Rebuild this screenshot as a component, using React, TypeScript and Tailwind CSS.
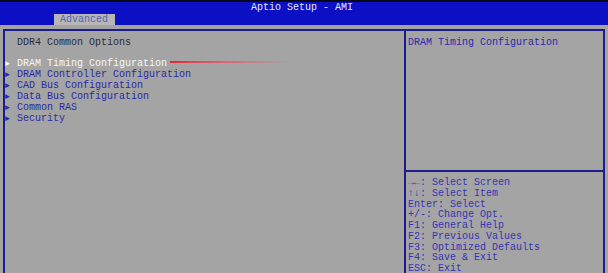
const menuItems = [
  'DRAM Timing Configuration',
  'DRAM Controller Configuration',
  'CAD Bus Configuration',
  'Data Bus Configuration',
  'Common RAS',
  'Security',
];

const helpLines = [
  '→←: Select Screen',
  '↑↓: Select Item',
  'Enter: Select',
  '+/-: Change Opt.',
  'F1: General Help',
  'F2: Previous Values',
  'F3: Optimized Defaults',
  'F4: Save & Exit',
  'ESC: Exit',
];

export default function App() {
  return (
    <div
      className="w-[608px] h-[273px] overflow-hidden bg-[#a4a4a4] text-[10px] whitespace-pre"
      style={{ fontFamily: '"Liberation Mono", "DejaVu Sans Mono", monospace' }}
    >
      {/* Header bar */}
      <div className="h-[2px] bg-[#05051a]"></div>
      <div className="h-[23px] bg-[#0c10c4] flex flex-col">
        <div className="h-[12px] leading-[12px] text-center text-[#e6e8ff] pr-[4px]">Aptio Setup - AMI</div>
        <div className="flex-1 flex">
          <div className="ml-[54px] w-[61px] bg-[#b6b6b8] text-[#5464ac] leading-[11px] pl-[6px]">Advanced</div>
        </div>
      </div>

      {/* Body frame */}
      <div className="pt-[4px] pl-[3px] flex">
        {/* Left panel */}
        <div className="w-[401px] h-[250px] border-l-2 border-t-2 border-[#1c1c8c] pt-[6px]">
          <div className="pl-[12px] leading-[11px] text-[#2c2c3c]">DDR4 Common Options</div>
          <div className="mt-[10px] flex flex-col">
            {menuItems.map((item, i) => (
              <div key={item} className="flex items-center h-[11px] leading-[11px]">
                <span className={`w-[12px] text-[8px] ${i === 0 ? 'text-[#f4f4f4]' : 'text-[#2a2aa8]'}`}>►</span>
                <span className={i === 0 ? 'text-[#f6f6f6]' : 'text-[#2a2aa8]'}>{item}</span>
                {i === 0 && (
                  <span className="ml-[3px] -mt-[3px] w-[118px] h-[1.5px] bg-gradient-to-r from-[#e0243a] via-[#d86878] to-transparent"></span>
                )}
              </div>
            ))}
          </div>
        </div>

        {/* Right panel */}
        <div className="w-[201px] h-[250px] border-l-2 border-t-2 border-r-2 border-[#1c1c8c] flex flex-col">
          <div className="h-[139px] pl-[2px] pt-[6px] leading-[11px] text-[#2a2aa8]">DRAM Timing Configuration</div>
          <div className="border-t-2 border-[#1c1c8c] pl-[2px] pt-[6px] text-[#3434b4] leading-[10.75px]">
            {helpLines.map((line) => (
              <div key={line}>{line}</div>
            ))}
          </div>
        </div>
      </div>
    </div>
  );
}
